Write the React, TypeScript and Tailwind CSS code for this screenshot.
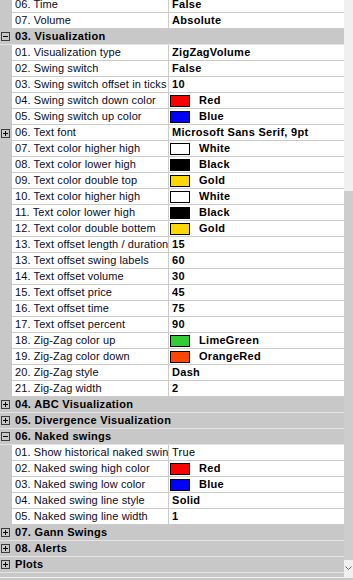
import React from "react";

type Row =
  | { kind: "cat"; label: string; open: boolean }
  | { kind: "prop"; name: string; value: string; color?: string; plain?: boolean; expand?: boolean };

const rows: Row[] = [
  { kind: "prop", name: "06. Time", value: "False" },
  { kind: "prop", name: "07. Volume", value: "Absolute" },
  { kind: "cat", label: "03. Visualization", open: true },
  { kind: "prop", name: "01. Visualization type", value: "ZigZagVolume" },
  { kind: "prop", name: "02. Swing switch", value: "False" },
  { kind: "prop", name: "03. Swing switch offset in ticks", value: "10" },
  { kind: "prop", name: "04. Swing switch down color", value: "Red", color: "#ff0000" },
  { kind: "prop", name: "05. Swing switch up color", value: "Blue", color: "#0000ff" },
  { kind: "prop", name: "06. Text font", value: "Microsoft Sans Serif, 9pt", expand: true },
  { kind: "prop", name: "07. Text color higher high", value: "White", color: "#ffffff" },
  { kind: "prop", name: "08. Text color lower high", value: "Black", color: "#000000" },
  { kind: "prop", name: "09. Text color double top", value: "Gold", color: "#ffd700" },
  { kind: "prop", name: "10. Text color higher high", value: "White", color: "#ffffff" },
  { kind: "prop", name: "11. Text color lower high", value: "Black", color: "#000000" },
  { kind: "prop", name: "12. Text color double bottem", value: "Gold", color: "#ffd700" },
  { kind: "prop", name: "13. Text offset length / duration", value: "15" },
  { kind: "prop", name: "13. Text offset swing labels", value: "60" },
  { kind: "prop", name: "14. Text offset volume", value: "30" },
  { kind: "prop", name: "15. Text offset price", value: "45" },
  { kind: "prop", name: "16. Text offset time", value: "75" },
  { kind: "prop", name: "17. Text offset percent", value: "90" },
  { kind: "prop", name: "18. Zig-Zag color up", value: "LimeGreen", color: "#32cd32" },
  { kind: "prop", name: "19. Zig-Zag color down", value: "OrangeRed", color: "#ff4500" },
  { kind: "prop", name: "20. Zig-Zag style", value: "Dash" },
  { kind: "prop", name: "21. Zig-Zag width", value: "2" },
  { kind: "cat", label: "04. ABC Visualization", open: false },
  { kind: "cat", label: "05. Divergence Visualization", open: false },
  { kind: "cat", label: "06. Naked swings", open: true },
  { kind: "prop", name: "01. Show historical naked swings", value: "True", plain: true },
  { kind: "prop", name: "02. Naked swing high color", value: "Red", color: "#ff0000" },
  { kind: "prop", name: "03. Naked swing low color", value: "Blue", color: "#0000ff" },
  { kind: "prop", name: "04. Naked swing line style", value: "Solid" },
  { kind: "prop", name: "05. Naked swing line width", value: "1" },
  { kind: "cat", label: "07. Gann Swings", open: false },
  { kind: "cat", label: "08. Alerts", open: false },
  { kind: "cat", label: "Plots", open: false },
];

// small +/- box like the WinForms grid glyph
function ExpandBox({ open }: { open: boolean }) {
  return (
    <svg width="9" height="9" viewBox="0 0 9 9" className="block">
      <rect x="0.5" y="0.5" width="8" height="8" fill="none" stroke="#3c3c3c" />
      <line x1="2" y1="4.5" x2="7" y2="4.5" stroke="#000" />
      {!open && <line x1="4.5" y1="2" x2="4.5" y2="7" stroke="#000" />}
    </svg>
  );
}

function CatRow({ label, open }: { label: string; open: boolean }) {
  return (
    <div className="flex h-[16px] shrink-0 items-center bg-[#c8c8c8] border-b border-[#e4e4e4]">
      <div className="w-[15px] shrink-0 pl-[1px]">
        <ExpandBox open={open} />
      </div>
      <span className="font-bold leading-[15px] tracking-[0.3px] whitespace-nowrap">{label}</span>
    </div>
  );
}

function PropRow({ row }: { row: Extract<Row, { kind: "prop" }> }) {
  return (
    <div className="flex h-[16px] shrink-0">
      <div className="w-[12px] shrink-0 bg-[#c8c8c8] flex items-center pl-[1px]">
        {row.expand && <ExpandBox open={false} />}
      </div>
      <div className="flex flex-1 border-b border-[#cbcbcb] bg-white">
        <div className="w-[157px] shrink-0 overflow-hidden whitespace-nowrap border-r border-[#cbcbcb] pl-[3px] leading-[15px] tracking-[0.1px] text-[#0a0a23]">
          {row.name}
        </div>
        <div className="flex flex-1 items-center overflow-hidden whitespace-nowrap leading-[15px] tracking-[0.3px]">
          {row.color ? (
            <>
              <span
                className="ml-[1px] h-[12px] w-[20px] shrink-0 border border-black"
                style={{ backgroundColor: row.color }}
              />
              <span className="ml-[9px] font-bold">{row.value}</span>
            </>
          ) : (
            <span className={row.plain ? "pl-[3px]" : "pl-[3px] font-bold"}>{row.value}</span>
          )}
        </div>
      </div>
    </div>
  );
}

export default function App() {
  return (
    <div
      className="w-[353px] h-[580px] overflow-hidden bg-[#c8c8c8] text-[11px] text-black"
      style={{ fontFamily: '"Liberation Sans", Arial, sans-serif' }}
    >
      <div className="flex h-[577px]">
        <div className="w-[344px] overflow-hidden bg-[#c8c8c8]">
          <div className="-mt-[3px] flex flex-col">
            {rows.map((r, i) =>
              r.kind === "cat" ? (
                <CatRow key={i} label={r.label} open={r.open} />
              ) : (
                <PropRow key={i} row={r} />
              )
            )}
          </div>
        </div>
        {/* scrollbar, cut off at the right edge */}
        <div className="flex w-[9px] flex-col bg-[#f0f0f0]">
          <div className="h-[191px] shrink-0" />
          <div className="flex-1 bg-[#cdcdcd]" />
          <div className="flex h-[17px] shrink-0 items-center justify-center">
            <svg width="7" height="5" viewBox="0 0 7 5">
              <path d="M0.5 0.5 L3.5 3.5 L6.5 0.5" fill="none" stroke="#606060" />
            </svg>
          </div>
        </div>
      </div>
      <div className="h-[1px] bg-[#f0f0f0]" />
    </div>
  );
}
